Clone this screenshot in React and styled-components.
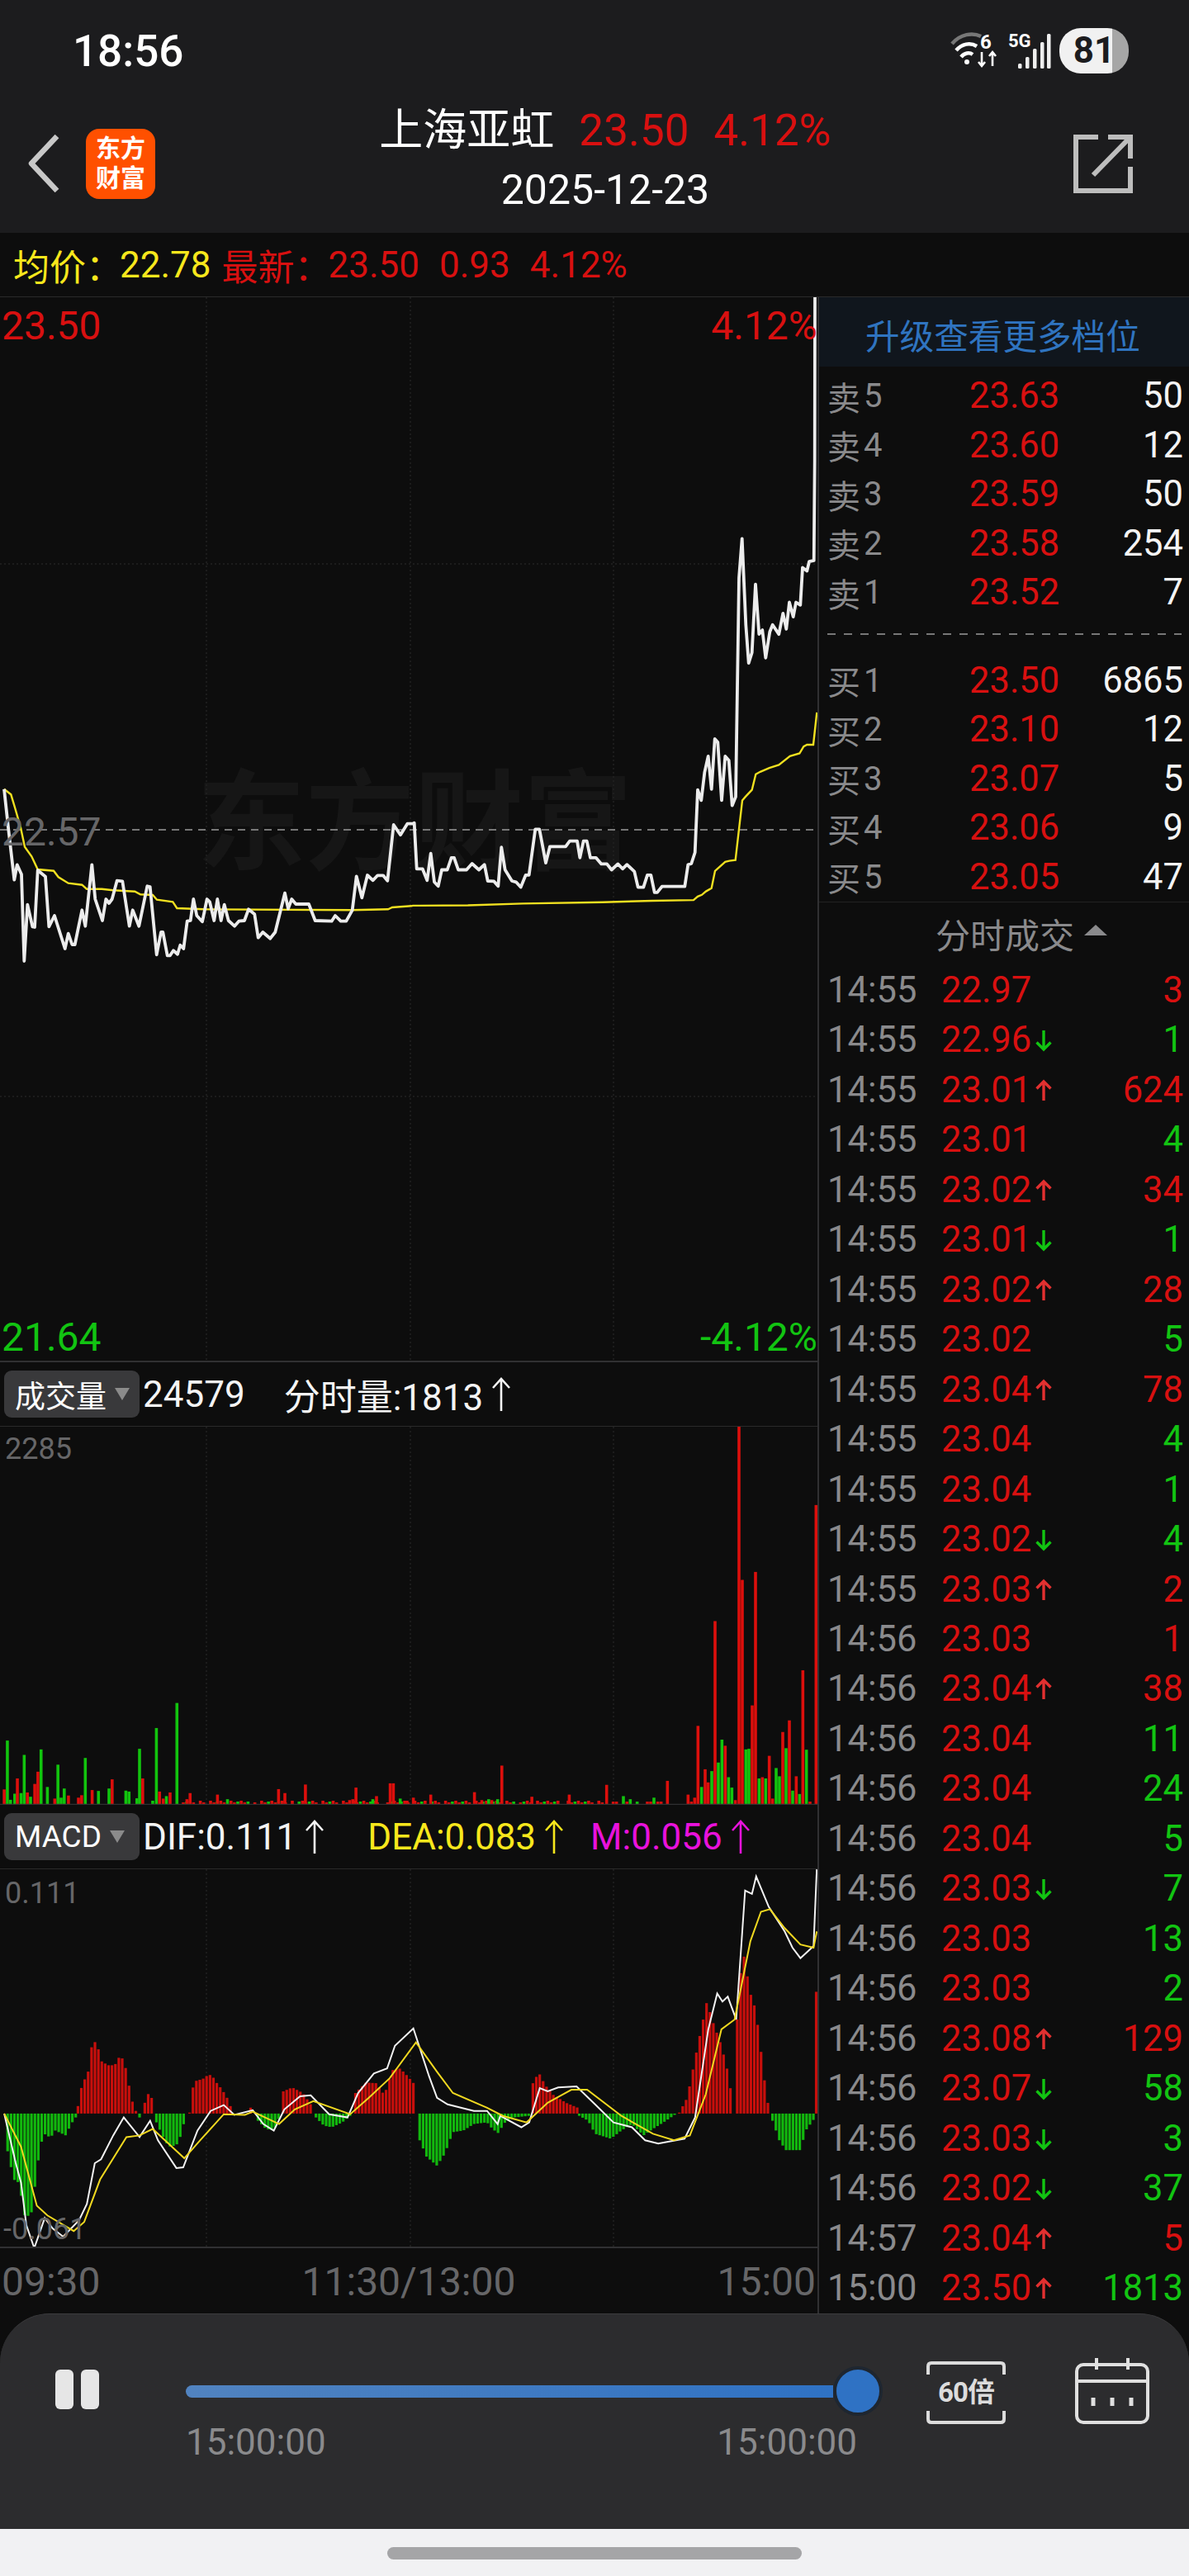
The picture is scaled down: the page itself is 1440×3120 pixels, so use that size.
import React from 'react';
import styled, { createGlobalStyle } from 'styled-components';

const RED = '#d81010';
const GREEN = '#12c412';
const YELLOW = '#f7e71c';
const MAGENTA = '#e812dc';
const GREY = '#8a8a8c';
const DIM = '#666668';
const BG = '#0d0d0d';
const SANS = 'Roboto, "Noto Sans CJK SC", sans-serif';
const tones = { red: RED, green: GREEN, yellow: YELLOW, magenta: MAGENTA, grey: GREY, dim: DIM, white: '#f4f4f4' };

const GlobalStyle = createGlobalStyle`
	html, body { margin: 0; padding: 0; background: ${ BG }; }
	body { font-family: ${ SANS }; color: #fff; }
	* { box-sizing: border-box; }
`;

const Page = styled.div`
	width: 1440px;
	height: 3120px;
	overflow: hidden;
	background: ${ BG };
	display: flex;
	flex-direction: column;
`;

const TopBar = styled.header`
	height: 282px;
	background: #1c1c1e;
`;

const StatusRow = styled.div`
	height: 122px;
	padding: 10px 73px 0 88px;
	display: flex;
	align-items: center;
	justify-content: space-between;
`;

const Clock = styled.div`
	font-size: 53px;
	font-weight: 500;
	line-height: 1;
	margin-top: -8px;
`;

const StatusIcons = styled.div`
	display: flex;
	align-items: center;
	gap: 10px;
	margin-top: -10px;
`;

const Battery = styled.div`
	width: 84px;
	height: 55px;
	border-radius: 26px;
	background: linear-gradient(90deg, #f1f1f1 76%, #a6a6a6 76%);
	color: #1c1c1e;
	font-size: 44px;
	font-weight: 700;
	line-height: 55px;
	text-align: center;
`;

const NavRow = styled.div`
	display: grid;
	grid-template-columns: 313px 840px 287px;
	align-items: center;
	height: 126px;
`;

const NavLeft = styled.div`
	display: flex;
	align-items: center;
	gap: 32px;
	padding-left: 34px;
	margin-top: 12px;
`;

const Logo = styled.div`
	width: 84px;
	height: 85px;
	border-radius: 16px;
	background: #ff5000;
	color: #fff;
	font-size: 30px;
	font-weight: 700;
	line-height: 36px;
	text-align: center;
	padding-top: 6px;
`;

const NavTitle = styled.div`
	text-align: center;
`;

const TitleLine = styled.div`
	display: flex;
	justify-content: center;
	gap: 30px;
	font-size: 53px;
	line-height: 64px;
	margin-top: 4px;
`;

const DateLine = styled.div`
	font-size: 50px;
	line-height: 64px;
	margin-top: 8px;
`;

const ShareWrap = styled.div`
	display: flex;
	justify-content: flex-end;
	padding-right: 68px;
	margin-top: 12px;
`;

const Tone = styled.span`
	color: ${ p => tones[ p.$tone ] };
`;

const InfoBar = styled.div`
	height: 78px;
	padding-left: 16px;
	display: flex;
	align-items: center;
	font-size: 44px;
	background: ${ BG };
	border-bottom: 1px solid #2a2a2a;
	white-space: pre;
`;

const Main = styled.main`
	height: 2442px;
	display: flex;
`;

const ChartCol = styled.section`
	width: 990px;
	flex: none;
`;

const Pane = styled.div`
	position: relative;
	height: ${ p => p.$h }px;
	border-bottom: ${ p => p.$line ? '2px solid #303032' : 'none' };
`;

const Plot = styled.svg`
	display: block;
	position: relative;
	width: 990px;
	height: ${ p => p.$h }px;
`;

const Watermark = styled.div`
	position: absolute;
	left: 238px;
	top: 572px;
	font-size: 132px;
	line-height: 1;
	font-weight: 700;
	color: #161616;
	letter-spacing: 0;
	white-space: nowrap;
`;

const PlotLabel = styled.div`
	position: absolute;
	left: ${ p => p.$right ? 'auto' : `${ p.$left || 2 }px` };
	right: ${ p => p.$right ? '0' : 'auto' };
	top: ${ p => p.$top }px;
	color: ${ p => tones[ p.$tone ] };
	font-size: ${ p => p.$size || 48 }px;
	line-height: 1;
`;

const IndicatorBar = styled.div`
	height: 78px;
	display: flex;
	align-items: center;
	padding-left: 5px;
	font-size: 44px;
	border-bottom: 1px solid #2a2a2a;
	white-space: pre;
`;

const IndicatorPill = styled.div`
	width: 164px;
	height: 57px;
	margin-right: 4px;
	border-radius: 9px;
	background: #39393b;
	padding-left: 13px;
	display: flex;
	align-items: center;
	gap: 10px;
	font-size: 37px;
	flex: none;

	&::after {
		content: '';
		border-left: 9px solid transparent;
		border-right: 9px solid transparent;
		border-top: 15px solid #8b8b8b;
	}
`;

const Stat = styled.span`
	color: ${ p => tones[ p.$tone ] };
	margin-left: ${ p => p.$gap || 0 }px;
	display: inline-flex;
	align-items: center;
`;

const TimeAxis = styled.div`
	height: 76px;
	display: flex;
	justify-content: space-between;
	padding: 15px 2px 0;
	color: ${ DIM };
	font-size: 48px;
	line-height: 1.1;
`;

const SideCol = styled.aside`
	flex: 1;
	border-left: 2px solid #303032;
	display: flex;
	flex-direction: column;
`;

const UpgradeBar = styled.div`
	height: 84px;
	background: #10161d;
	color: #2f74c0;
	font-size: 41.6px;
	padding: 6px 0 0 56px;
	display: flex;
	align-items: center;
	white-space: nowrap;
`;

const OrderList = styled.div`
	padding-top: ${ p => p.$top }px;
`;

const OrderRow = styled.div`
	height: 59.5px;
	display: grid;
	grid-template-columns: 172px 1fr auto;
	align-items: center;
	padding: 0 7px 0 10px;
	font-size: 43.5px;
`;

const OrderLabel = styled.span`
	color: ${ GREY };
	font-size: 40px;
	display: flex;
	gap: 4px;
	align-items: center;
`;

const OrderDivider = styled.div`
	height: 2px;
	margin: 20px 9px 25px 10px;
	background: repeating-linear-gradient(90deg, #777 0 10px, transparent 10px 20px);
`;

const TradesTitle = styled.div`
	height: 77px;
	border-top: 1px solid #222;
	display: flex;
	align-items: center;
	gap: 12px;
	padding-left: 141px;
	color: ${ GREY };
	font-size: 42px;
	white-space: nowrap;

	&::after {
		content: '';
		border-left: 14px solid transparent;
		border-right: 14px solid transparent;
		border-bottom: 13px solid ${ GREY };
		margin-top: -8px;
	}
`;

const TradeRow = styled.div`
	height: 60.5px;
	display: grid;
	grid-template-columns: 138px 114px 24px 1fr;
	align-items: center;
	padding: 0 7px 0 10px;
	font-size: 43.5px;
`;

const TradeQty = styled.span`
	text-align: right;
	color: ${ p => tones[ p.$tone ] };
`;

const Sheet = styled.div`
	height: 261px;
	background: #2c2c2e;
	border-top: 1px solid #3c3c3e;
	border-radius: 60px 60px 0 0;
	padding: 54px 48px 0 67px;
	display: flex;
	align-items: flex-start;
`;

const PauseIcon = styled.div`
	width: 53px;
	height: 48px;
	margin-top: 13px;
	flex: none;
	display: flex;
	justify-content: space-between;

	&::before, &::after {
		content: '';
		width: 22px;
		border-radius: 6px;
		background: #e6e6e6;
	}
`;

const SliderCol = styled.div`
	width: 841px;
	margin-left: 105px;
	margin-top: 12px;
	flex: none;
`;

const Slider = styled.div`
	height: 54px;
	display: flex;
	align-items: center;
`;

const SliderFill = styled.div`
	flex: 1;
	height: 15px;
	border-radius: 8px 0 0 8px;
	background: linear-gradient(90deg, #5183c0, #2f72c4);
`;

const SliderThumb = styled.div`
	width: 60px;
	height: 60px;
	flex: none;
	margin-right: -3px;
	border-radius: 50%;
	background: #2f72c4;
	border: 4px solid #1e2630;
`;

const SliderTimes = styled.div`
	display: flex;
	justify-content: space-between;
	padding-right: 28px;
	margin-top: 9px;
	color: ${ GREY };
	font-size: 44px;
	line-height: 1.2;
`;

const SpeedButton = styled.div`
	position: relative;
	width: 96px;
	height: 76px;
	margin-left: 56px;
	margin-top: 3px;
	flex: none;
	color: #dcdcdc;
	font-size: 33px;
	font-weight: 700;
	line-height: 76px;
	text-align: center;
	letter-spacing: -1px;
	white-space: nowrap;
`;

const SpeedFrame = styled.svg`
	position: absolute;
	left: 0;
	top: 0;
`;

const CalendarIcon = styled.svg`
	margin-left: 84px;
	margin-top: -1px;
	flex: none;
`;

const HomeBar = styled.div`
	height: 57px;
	background: #f1f1f3;
	padding-top: 22px;
	display: flex;
	justify-content: center;
`;

const HomeHandle = styled.div`
	width: 502px;
	height: 15px;
	border-radius: 8px;
	background: #a5a5a7;
`;

// 读图坐标换算成页面坐标
const fromZoom2 = pts => pts.map( ( [ x, y ] ) => [ x / 3, 900 + y / 3 ] );
const fromZoom3 = pts => pts.map( ( [ x, y ] ) => [ 500 + x / 3, 560 + y / 2.376 ] );
const toPoints = pts => pts.map( ( [ x, y ] ) => `${ x.toFixed( 1 ) },${ y.toFixed( 1 ) }` ).join( ' ' );

const priceLine = [
	...fromZoom2( [ [15,170],[30,310],[52,500],[62,445],[78,480],[88,795],[100,590],[118,670],[126,672],[137,465],[165,488],[178,670],[198,630],[236,750],[248,695],[262,735],[272,735],[298,610],[310,668],[334,445],[346,570],[372,648],[385,570],[396,585],[407,570],[425,503],[445,505],[470,668],[482,610],[505,668],[535,523],[545,525],[569,772],[585,690],[592,690],[608,775],[618,775],[630,757],[645,770],[655,737],[667,750],[680,650],[692,648],[703,570],[715,630],[735,652],[752,570],[762,580],[778,648],[790,570],[803,648],[815,590],[830,648],[852,668],[868,650],[888,648],[903,607],[925,625],[938,710],[955,690],[982,713],[1000,690],[1035,548],[1047,605],[1060,570],[1075,588],[1122,588],[1145,648],[1205,650],[1218,630],[1238,650],[1258,650],[1280,610],[1295,487],[1315,565],[1335,483],[1355,502],[1372,484],[1392,484],[1408,503],[1430,300],[1455,337],[1480,296],[1500,296] ] ),
	...fromZoom3( [ [5,1040],[14,1172],[35,1172],[52,1205],[65,1128],[78,1210],[92,1222],[105,1175],[125,1175],[140,1140],[150,1140],[165,1175],[195,1175],[215,1157],[240,1175],[260,1160],[272,1207],[295,1208],[310,1222],[322,1110],[335,1175],[360,1207],[375,1210],[392,1225],[410,1190],[422,1190],[445,1058],[460,1058],[483,1155],[498,1108],[555,1108],[570,1092],[597,1092],[607,1140],[620,1092],[632,1092],[645,1140],[665,1140],[685,1158],[705,1158],[722,1175],[745,1158],[762,1172],[778,1160],[805,1180],[818,1225],[838,1225],[852,1190],[865,1190],[878,1240],[888,1240],[905,1223],[988,1223],[1000,1160],[1012,1157],[1025,1125],[1035,945],[1048,975],[1060,895],[1073,848],[1085,943],[1097,798],[1108,808],[1122,975],[1135,848],[1148,860],[1160,990],[1173,965],[1185,335],[1196,222],[1210,470],[1220,580],[1232,550],[1245,353],[1258,497],[1270,485],[1282,565],[1297,490],[1307,470],[1330,497],[1345,437],[1357,482],[1368,405],[1382,447],[1392,405],[1408,413],[1416,305],[1432,315],[1440,288],[1457,285],[1460,0] ] ),
	[ 987, 361 ],
];

const avgLine = [
	...fromZoom2( [ [15,170],[40,190],[55,240],[75,310],[90,380],[115,415],[137,462],[195,467],[212,490],[248,512],[298,518],[315,533],[370,533],[410,538],[490,542],[510,553],[555,555],[570,572],[628,580],[643,603],[740,607],[1280,610],[1410,607],[1425,600],[1495,595] ] ),
	...fromZoom3( [ [0,1278],[200,1277],[400,1272],[690,1268],[870,1264],[1020,1262],[1035,1252],[1050,1247],[1065,1237],[1085,1228],[1098,1178],[1135,1152],[1150,1149],[1172,1147],[1197,975],[1208,965],[1232,945],[1246,900],[1262,893],[1295,882],[1330,873],[1370,848],[1405,840],[1420,820],[1432,815],[1455,815],[1468,722] ] ),
];

const VOL_BASE = 2187;
const volA = ( x, y, tone ) => ( { x: x / 1.568, h: VOL_BASE - ( 1640 + y / 2.703 ), tone } );
const volB = ( x, y, tone ) => ( { x: 740 + x / 3, h: VOL_BASE - ( 1640 + y / 2.703 ), tone } );

const volumeFill = [];
for ( let i = 0; i < 125; i++ ) {
	if ( i % 9 === 4 || i % 13 === 7 ) {
		continue;
	}
	volumeFill.push( { x: 222 + i * 4.125, h: 3 + ( i % 3 ), tone: ( i * 7 ) % 3 === 1 ? 'green' : 'red' } );
}

const volumeBars = [
	...volumeFill,
	...[ [14,1268],[46,1315],[78,1297],[110,1347],[162,1325],[265,1295],[297,1227],[336,1145],[90,1420],[122,1425],[207,1425],[239,1432],[245,1435],[187,1433],[28,1442],[20,1462],[40,1440],[58,1452],[116,1455],[260,1457],[316,1450],[290,1465],[760,1458],[945,1460],[928,1460],[432,1460],[708,1460] ].map( b => volA( b[0], b[1], 'green' ) ),
	...[ [8,1428],[33,1392],[52,1438],[72,1370],[66,1410],[104,1458],[130,1448],[155,1447],[149,1455],[175,1430],[213,1395],[271,1392],[303,1435],[323,1438],[310,1458],[361,1440],[355,1460],[413,1445],[529,1427],[541,1440],[580,1412],[676,1422],[664,1463],[670,1460],[715,1450],[741,1408],[747,1408],[818,1445],[785,1455],[773,1465],[901,1437],[953,1350],[915,1463],[934,1463],[1010,1452],[1081,1445],[1152,1413] ].map( b => volA( b[0], b[1], 'red' ) ),
	...[ [329,1420],[366,1368],[390,1340],[403,1265],[427,1388],[439,1422],[490,1297],[501,1295],[538,1392],[562,1392],[600,1358],[612,1385],[636,1293],[660,1432],[685,1443],[710,1298],[45,1450],[70,1460],[95,1468],[156,1455] ].map( b => volB( b[0], b[1], 'green' ) ),
	...[ [316,1220],[342,1362],[353,1405],[378,877],[415,1285],[452,1463],[465,240],[477,742],[513,1153],[525,716],[550,1388],[575,1318],[587,1458],[624,1240],[648,1202],[673,1385],[697,1038],[723,1468],[745,497],[205,1400],[280,1445],[292,1468],[304,1455],[132,1468],[144,1468],[170,1468],[182,1468],[8,1468],[20,1468],[58,1468] ].map( b => volB( b[0], b[1], 'red' ) ),
];

const MACD_ZERO = 2190 + 938 / 2.529;
const macdY = y => 2190 + y / 2.529;
const fromZoom6 = pts => pts.map( ( [ x, y ] ) => [ x / 1.568, macdY( y ) ] );

const macdSegments = [
	[ 'green', [[8,938],[14,1050],[26,1140],[36,1150],[48,1260],[60,1240],[70,1115],[76,1040],[84,1000],[96,1012],[105,990],[125,1005],[135,970],[146,945]] ],
	[ 'red', [[148,915],[155,855],[170,800],[175,716],[185,722],[190,775],[205,790],[218,790],[225,767],[235,770],[240,810],[250,895],[258,930]] ],
	[ 'green', [[265,950],[267,950]] ],
	[ 'red', [[275,905],[283,872],[292,905],[294,938]] ],
	[ 'green', [[297,965],[310,1010],[320,1040],[335,1035],[345,1000],[352,945]] ],
	[ 'red', [[360,935],[368,840],[385,832],[395,820],[402,820],[412,845],[422,865],[432,892],[440,925]] ],
	[ 'red', [[476,920],[482,925]] ],
	[ 'green', [[490,960],[505,985],[520,990],[530,950]] ],
	[ 'red', [[538,870],[555,858],[575,875],[590,910],[595,935]] ],
	[ 'green', [[600,950],[615,975],[630,980],[650,965],[665,945]] ],
	[ 'red', [[675,875],[695,843],[715,845],[730,882],[745,805],[760,800],[775,825],[788,850],[790,935]] ],
	[ 'green', [[797,1020],[810,1070],[830,1098],[845,1060],[860,995],[880,990],[900,970],[925,965],[935,985],[948,1000],[955,970],[975,950],[1005,945]] ],
	[ 'red', [[1012,845],[1023,812],[1035,850],[1050,880],[1075,905],[1097,920]] ],
	[ 'green', [[1100,945],[1117,960],[1130,1000],[1160,1015],[1180,990],[1200,970],[1222,1005],[1240,985],[1260,965],[1283,940]] ],
	[ 'red', [[1290,935],[1305,890],[1325,730],[1343,590],[1350,640],[1370,730],[1385,830],[1392,935]] ],
	[ 'red', [[1400,650],[1410,430],[1425,570],[1435,620],[1442,705],[1455,880],[1462,935]] ],
	[ 'green', [[1467,960],[1480,1020],[1492,1050],[1520,1050],[1530,990],[1548,950]] ],
	[ 'red', [[1550,565],[1552,565]] ],
];

const macdBars = macdSegments.flatMap( ( [ tone, env ] ) => {
	const bars = [];
	const start = env[0][0] / 1.568;
	const end = env[ env.length - 1 ][0] / 1.568;
	for ( let x = start; x <= end + 0.1; x += 4.125 ) {
		const zx = x * 1.568;
		let k = 0;
		while ( k < env.length - 2 && env[ k + 1 ][0] < zx ) {
			k++;
		}
		const [ a, b ] = [ env[ k ], env[ k + 1 ] ];
		const zy = a[1] + ( b[1] - a[1] ) * Math.min( 1, ( zx - a[0] ) / ( b[0] - a[0] ) );
		bars.push( { x, y: macdY( zy ), tone } );
	}
	return bars;
} );

const difLine = fromZoom6( [ [8,938],[30,1090],[40,1150],[50,1280],[65,1350],[85,1258],[100,1290],[120,1315],[150,1265],[165,1215],[180,1090],[192,1078],[215,1005],[235,950],[265,1010],[285,960],[300,1020],[335,1105],[348,1103],[375,990],[400,930],[425,912],[445,942],[480,928],[500,970],[520,990],[540,925],[570,885],[590,882],[625,940],[660,950],[680,875],[710,815],[735,800],[750,730],[785,677],[815,825],[830,890],[850,910],[900,930],[925,930],[945,970],[950,945],[990,980],[1005,965],[1025,860],[1040,870],[1060,858],[1095,855],[1130,910],[1165,965],[1200,980],[1225,1020],[1250,1030],[1300,1015],[1320,950],[1345,680],[1362,570],[1372,595],[1382,580],[1398,650],[1415,255],[1428,265],[1436,212],[1460,305],[1490,380],[1505,430],[1520,462],[1545,425],[1551,190] ] );
const deaLine = fromZoom6( [ [8,938],[40,1040],[70,1220],[90,1250],[140,1298],[160,1270],[190,1140],[240,1010],[265,1005],[290,985],[320,1030],[350,1075],[380,1020],[425,940],[465,942],[480,932],[530,970],[560,925],[595,900],[665,940],[700,890],[740,830],[790,720],[830,810],[860,875],[925,920],[955,945],[1000,965],[1040,905],[1085,865],[1115,865],[1180,945],[1240,1000],[1280,1020],[1310,1005],[1340,880],[1370,680],[1395,650],[1425,410],[1445,320],[1462,312],[1490,370],[1520,420],[1545,430],[1551,380] ] );

const asks = [ [ 5, '23.63', '50' ], [ 4, '23.60', '12' ], [ 3, '23.59', '50' ], [ 2, '23.58', '254' ], [ 1, '23.52', '7' ] ];
const bids = [ [ 1, '23.50', '6865' ], [ 2, '23.10', '12' ], [ 3, '23.07', '5' ], [ 4, '23.06', '9' ], [ 5, '23.05', '47' ] ];

const trades = [
	[ '14:55', '22.97', '', '3', 'red' ],
	[ '14:55', '22.96', 'down', '1', 'green' ],
	[ '14:55', '23.01', 'up', '624', 'red' ],
	[ '14:55', '23.01', '', '4', 'green' ],
	[ '14:55', '23.02', 'up', '34', 'red' ],
	[ '14:55', '23.01', 'down', '1', 'green' ],
	[ '14:55', '23.02', 'up', '28', 'red' ],
	[ '14:55', '23.02', '', '5', 'green' ],
	[ '14:55', '23.04', 'up', '78', 'red' ],
	[ '14:55', '23.04', '', '4', 'green' ],
	[ '14:55', '23.04', '', '1', 'green' ],
	[ '14:55', '23.02', 'down', '4', 'green' ],
	[ '14:55', '23.03', 'up', '2', 'red' ],
	[ '14:56', '23.03', '', '1', 'red' ],
	[ '14:56', '23.04', 'up', '38', 'red' ],
	[ '14:56', '23.04', '', '11', 'green' ],
	[ '14:56', '23.04', '', '24', 'green' ],
	[ '14:56', '23.04', '', '5', 'green' ],
	[ '14:56', '23.03', 'down', '7', 'green' ],
	[ '14:56', '23.03', '', '13', 'green' ],
	[ '14:56', '23.03', '', '2', 'green' ],
	[ '14:56', '23.08', 'up', '129', 'red' ],
	[ '14:56', '23.07', 'down', '58', 'green' ],
	[ '14:56', '23.03', 'down', '3', 'green' ],
	[ '14:56', '23.02', 'down', '37', 'green' ],
	[ '14:57', '23.04', 'up', '5', 'red' ],
	[ '15:00', '23.50', 'up', '1813', 'green' ],
];

const GridLines = ( { rows = [], top, bottom } ) => (
	<g stroke="#222" strokeWidth="1.5" strokeDasharray="2 3">
		{ [ 250, 497, 743 ].map( x => <line key={ x } x1={ x } x2={ x } y1={ top } y2={ bottom } /> ) }
		{ rows.map( y => <line key={ y } x1="0" x2="990" y1={ y } y2={ y } /> ) }
	</g>
);

const TickArrow = ( { dir } ) => (
	<svg width="20" height="28" viewBox="0 0 20 28" fill="none" stroke={ dir === 'up' ? '#e23030' : GREEN } strokeWidth="3.4">
		{ dir === 'up'
			? <path d="M10 26V3M1.5 11.5L10 3l8.5 8.5" />
			: <path d="M10 2v23M1.5 16.5L10 25l8.5-8.5" /> }
	</svg>
);

const LongArrow = ( { color } ) => (
	<svg width="24" height="42" viewBox="0 0 24 42" fill="none" stroke={ color } strokeWidth="2.6" style={ { marginLeft: 10 } }>
		<path d="M12 41V2M2 13L12 2l10 11" />
	</svg>
);

const BackIcon = () => (
	<svg width="38" height="70" viewBox="0 0 38 70" fill="none" stroke="#c8c8c8" strokeWidth="6.5" strokeLinejoin="round">
		<path d="M35 2L4 35l31 33" />
	</svg>
);

const ShareIcon = () => (
	<svg width="72" height="72" viewBox="0 0 72 72" fill="none" stroke="#bdbdbd" strokeWidth="6">
		<path d="M30 4H3v65h66V40" />
		<path d="M42 4h27v26M69 4L24 50" />
	</svg>
);

const WifiIcon = () => (
	<svg width="60" height="46" viewBox="0 0 60 46" fill="none">
		<path d="M2 15C12 3 27 1 37 6" stroke="#777" strokeWidth="4.5" />
		<path d="M7 23C14 15 24 13 32 18" stroke="#fff" strokeWidth="4.5" />
		<path d="M13 31C17 26 23 25 27 28" stroke="#fff" strokeWidth="4.5" />
		<circle cx="20" cy="37" r="3" fill="#fff" />
		<text x="36" y="21" fill="#fff" fontSize="24" fontWeight="700" fontFamily="Roboto, sans-serif">6</text>
		<path d="M38 25v17M34 37l4 5 4-5M51 42V25M47 30l4-5 4 5" stroke="#fff" strokeWidth="2.6" />
	</svg>
);

const SignalIcon = () => (
	<svg width="52" height="46" viewBox="0 0 52 46">
		<text x="0" y="19" fill="#fff" fontSize="22" fontWeight="700" fontFamily="Roboto, sans-serif">5G</text>
		{ [ [ 12, 6 ], [ 21, 14 ], [ 30, 24 ], [ 39, 32 ], [ 47, 42 ] ].map( ( [ x, h ] ) => (
			<rect key={ x } x={ x } y={ 45 - h } width="4.5" height={ h } rx="1.5" fill="#eee" />
		) ) }
	</svg>
);

export default function App() {
	return (
		<Page>
			<GlobalStyle />

			<TopBar>
				<StatusRow>
					<Clock>18:56</Clock>
					<StatusIcons>
						<WifiIcon />
						<SignalIcon />
						<Battery>81</Battery>
					</StatusIcons>
				</StatusRow>

				<NavRow>
					<NavLeft>
						<BackIcon />
						<Logo>东方<br />财富</Logo>
					</NavLeft>
					<NavTitle>
						<TitleLine>
							<span>上海亚虹</span>
							<Tone $tone="red">23.50</Tone>
							<Tone $tone="red">4.12%</Tone>
						</TitleLine>
						<DateLine>2025-12-23</DateLine>
					</NavTitle>
					<ShareWrap>
						<ShareIcon />
					</ShareWrap>
				</NavRow>
			</TopBar>

			<InfoBar>
				<Stat $tone="yellow">均价：</Stat>
				<Stat $tone="yellow" $gap={ -3 }>22.78</Stat>
				<Stat $tone="red" $gap={ 13 }>最新：</Stat>
				<Stat $tone="red" $gap={ -3 }>23.50</Stat>
				<Stat $tone="red" $gap={ 24 }>0.93</Stat>
				<Stat $tone="red" $gap={ 24 }>4.12%</Stat>
			</InfoBar>

			<Main>
				<ChartCol>
					<Pane $h={ 1290 } $line>
						<Watermark>东方财富</Watermark>
						<Plot $h={ 1288 } viewBox="0 361 990 1288">
							<GridLines rows={ [ 684, 1329 ] } top={ 361 } bottom={ 1648 } />
							<line x1="0" x2="990" y1="1006" y2="1006" stroke="#9a9a9a" strokeWidth="1.6" strokeDasharray="9 7" />
							<polyline points={ toPoints( avgLine ) } fill="none" stroke="#f0e020" strokeWidth="2.4" />
							<polyline points={ toPoints( priceLine ) } fill="none" stroke="#ececec" strokeWidth="3.8" strokeLinejoin="round" />
						</Plot>
						<PlotLabel $top={ 11 } $tone="red">23.50</PlotLabel>
						<PlotLabel $top={ 11 } $right $tone="red">4.12%</PlotLabel>
						<PlotLabel $top={ 624 } $tone="dim">22.57</PlotLabel>
						<PlotLabel $top={ 1236 } $tone="green">21.64</PlotLabel>
						<PlotLabel $top={ 1236 } $right $tone="green">-4.12%</PlotLabel>
					</Pane>

					<IndicatorBar>
						<IndicatorPill>成交量</IndicatorPill>
						<Stat $tone="white">24579</Stat>
						<Stat $tone="white" $gap={ 47 }>分时量:1813<LongArrow color="#f4f4f4" /></Stat>
					</IndicatorBar>

					<Pane $h={ 458 }>
						<Plot $h={ 458 } viewBox="0 1729 990 458">
							<GridLines top={ 1729 } bottom={ 2187 } />
							{ volumeBars.map( ( b, i ) => (
								<rect key={ i } x={ b.x - 1.8 } y={ VOL_BASE - b.h } width="3.6" height={ b.h } fill={ b.tone === 'red' ? '#dc0f0c' : '#12c40e' } />
							) ) }
							<line x1="0" x2="990" y1="2186.5" y2="2186.5" stroke="#303032" strokeWidth="1.5" />
						</Plot>
						<PlotLabel $top={ 9 } $left={ 6 } $size={ 36 } $tone="dim">2285</PlotLabel>
					</Pane>

					<IndicatorBar>
						<IndicatorPill>MACD</IndicatorPill>
						<Stat $tone="white">DIF:0.111<LongArrow color="#f4f4f4" /></Stat>
						<Stat $tone="yellow" $gap={ 52 }>DEA:0.083<LongArrow color={ YELLOW } /></Stat>
						<Stat $tone="magenta" $gap={ 32 }>M:0.056<LongArrow color={ MAGENTA } /></Stat>
					</IndicatorBar>

					<Pane $h={ 459 } $line>
						<Plot $h={ 457 } viewBox="0 2265 990 457">
							<GridLines top={ 2265 } bottom={ 2722 } />
							{ macdBars.map( ( b, i ) => (
								<rect
									key={ i }
									x={ b.x - 1.6 }
									y={ Math.min( b.y, MACD_ZERO ) }
									width="3.2"
									height={ Math.abs( b.y - MACD_ZERO ) }
									fill={ b.tone === 'red' ? '#c80f0c' : '#12b80e' }
								/>
							) ) }
							<polyline points={ toPoints( difLine ) } fill="none" stroke="#f2f2f2" strokeWidth="2" />
							<polyline points={ toPoints( deaLine ) } fill="none" stroke="#f0d820" strokeWidth="2" />
						</Plot>
						<PlotLabel $top={ 11 } $left={ 6 } $size={ 36 } $tone="dim">0.111</PlotLabel>
						<PlotLabel $top={ 418 } $left={ 4 } $size={ 36 } $tone="dim">-0.061</PlotLabel>
					</Pane>

					<TimeAxis>
						<span>09:30</span>
						<span>11:30/13:00</span>
						<span>15:00</span>
					</TimeAxis>
				</ChartCol>

				<SideCol>
					<UpgradeBar>升级查看更多档位</UpgradeBar>

					<OrderList $top={ 6 }>
						{ asks.map( ( [ level, price, qty ] ) => (
							<OrderRow key={ level }>
								<OrderLabel>卖<span>{ level }</span></OrderLabel>
								<Tone $tone="red">{ price }</Tone>
								<Tone $tone="white">{ qty }</Tone>
							</OrderRow>
						) ) }
					</OrderList>
					<OrderDivider />
					<OrderList $top={ 0 }>
						{ bids.map( ( [ level, price, qty ] ) => (
							<OrderRow key={ level }>
								<OrderLabel>买<span>{ level }</span></OrderLabel>
								<Tone $tone="red">{ price }</Tone>
								<Tone $tone="white">{ qty }</Tone>
							</OrderRow>
						) ) }
					</OrderList>

					<TradesTitle>分时成交</TradesTitle>

					{ trades.map( ( [ time, price, dir, qty, tone ], i ) => (
						<TradeRow key={ i }>
							<Tone $tone="grey">{ time }</Tone>
							<Tone $tone="red">{ price }</Tone>
							<span>{ dir && <TickArrow dir={ dir } /> }</span>
							<TradeQty $tone={ tone }>{ qty }</TradeQty>
						</TradeRow>
					) ) }
				</SideCol>
			</Main>

			<Sheet>
				<PauseIcon />
				<SliderCol>
					<Slider>
						<SliderFill />
						<SliderThumb />
					</Slider>
					<SliderTimes>
						<span>15:00:00</span>
						<span>15:00:00</span>
					</SliderTimes>
				</SliderCol>
				<SpeedButton>
					<SpeedFrame width="96" height="76" viewBox="0 0 96 76" fill="none" stroke="#dcdcdc" strokeWidth="4">
						<path d="M2 16V6q0-4 4-4h84q4 0 4 4v10M2 60v10q0 4 4 4h84q4 0 4-4V60" />
					</SpeedFrame>
					60倍
				</SpeedButton>
				<CalendarIcon width="90" height="80" viewBox="0 0 90 80" fill="none" stroke="#e0e0e0" strokeWidth="4">
					<rect x="2" y="8" width="86" height="70" rx="8" />
					<path d="M2 28h86" />
					<path d="M26 0v14M64 0v14" />
					<path d="M22 48v10M45 48v10M68 48v10" strokeWidth="5" />
				</CalendarIcon>
			</Sheet>

			<HomeBar>
				<HomeHandle />
			</HomeBar>
		</Page>
	);
}
